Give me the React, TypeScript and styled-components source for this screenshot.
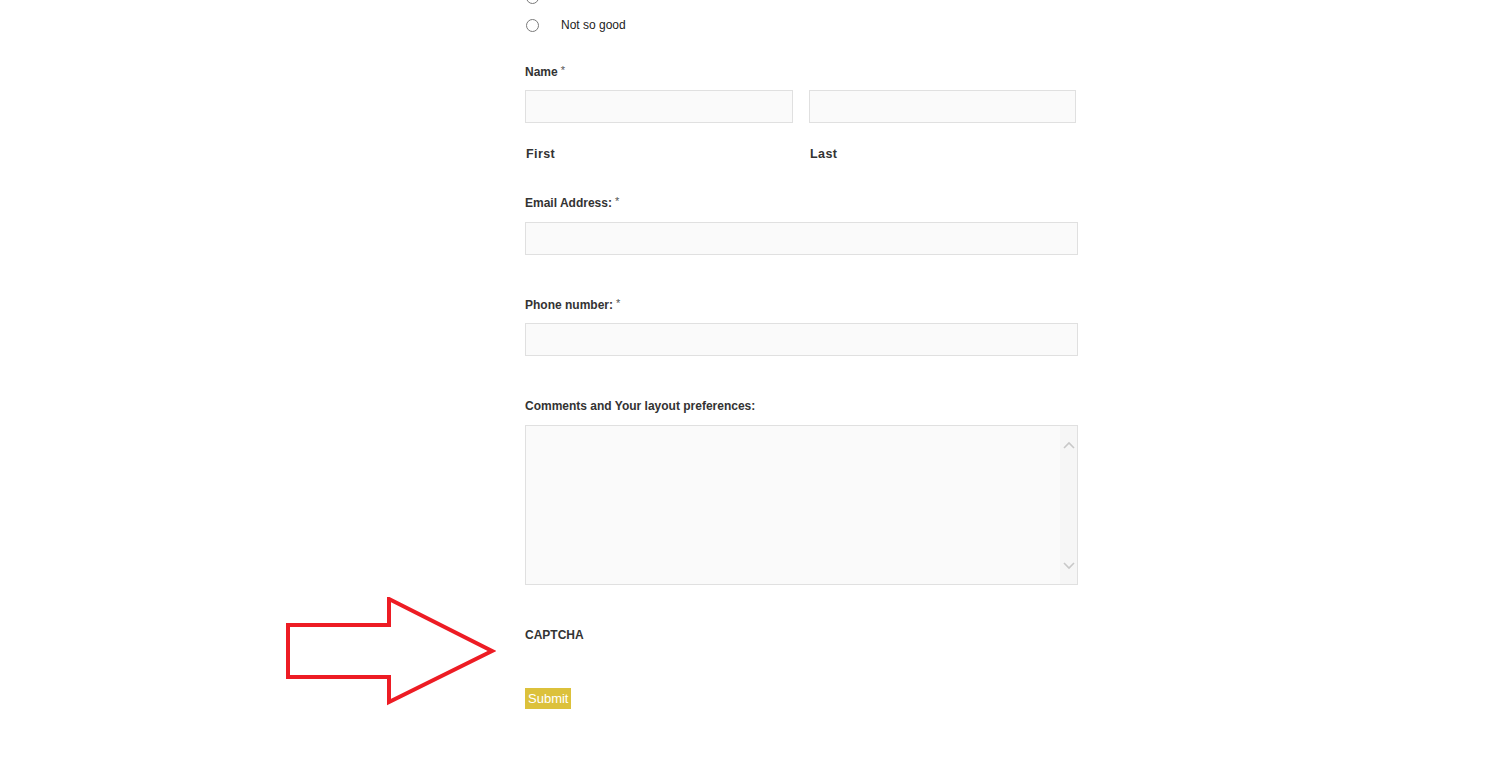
import React from "react";
import styled, { createGlobalStyle } from "styled-components";

const Global = createGlobalStyle`
  html, body { margin: 0; padding: 0; background: #ffffff; }
  body { font-family: Arial, "Liberation Sans", Helvetica, sans-serif; color: #333333; }
  * { box-sizing: border-box; }
`;

const Page = styled.div`
  position: relative;
  width: 1496px;
  height: 767px;
  overflow: hidden;
`;

const Form = styled.form`
  width: 553px;
  margin: -17px 0 0 525px;
  display: flex;
  flex-direction: column;
`;

const RadioRow = styled.label`
  height: 28px;
  display: flex;
  align-items: center;
  font-size: 12px;
  line-height: 16px;
  color: #222;
`;

const Radio = styled.input`
  appearance: none;
  width: 13px;
  height: 13px;
  margin: 0 22px 0 1px;
  border: 1px solid #7a7a7a;
  border-radius: 50%;
  background: #fff;
`;

const Label = styled.div<{ $top: number; $bottom: number }>`
  margin-top: ${(p) => p.$top}px;
  margin-bottom: ${(p) => p.$bottom}px;
  height: 16px;
  padding-top: 1px;
  font-size: 12px;
  line-height: 16px;
  font-weight: bold;
  color: #333;
`;

const Req = styled.span`
  position: relative;
  top: -2px;
  font-weight: normal;
  color: #555;
  font-size: 11px;
  line-height: 10px;
  margin-left: 3px;
`;

const NameGrid = styled.div`
  display: grid;
  grid-template-columns: 268px 267px;
  column-gap: 16px;
`;

const NameCol = styled.div`
  display: flex;
  flex-direction: column;
`;

const Input = styled.input`
  height: 33px;
  width: 100%;
  border: 1px solid #e0e0e0;
  background: #fafafa;
  outline: none;
`;

const SubLabel = styled.div`
  margin-top: 23px;
  padding-left: 1px;
  font-size: 12.5px;
  line-height: 16px;
  font-weight: bold;
  letter-spacing: 0.4px;
  color: #333;
`;

const AreaBox = styled.div`
  height: 160px;
  display: flex;
  border: 1px solid #e0e0e0;
  background: #fafafa;
`;

const TextArea = styled.textarea`
  flex: 1;
  border: none;
  background: transparent;
  resize: none;
  outline: none;
`;

const ScrollStrip = styled.div`
  width: 17px;
  background: #f6f6f6;
  display: flex;
  flex-direction: column;
  justify-content: space-between;
  align-items: center;
  padding: 15px 0 14px;
`;

const Submit = styled.button`
  align-self: flex-start;
  margin-top: 46px;
  height: 21px;
  padding: 0 3px;
  border: none;
  background: #dcc13b;
  color: #ffffff;
  font-family: Arial, "Liberation Sans", sans-serif;
  font-size: 13px;
  line-height: 21px;
`;

const ArrowSvg = styled.svg`
  position: absolute;
  left: 286px;
  top: 597px;
`;

const Chevron = ({ up }: { up?: boolean }) => (
  <svg width="12" height="8" viewBox="0 0 12 8">
    <polyline
      points={up ? "1,7 6,2 11,7" : "1,1 6,6 11,1"}
      fill="none"
      stroke="#c8c8c8"
      strokeWidth="1.6"
    />
  </svg>
);

export default function App() {
  return (
    <Page>
      <Global />
      <Form onSubmit={(e) => e.preventDefault()}>
        <RadioRow>
          <Radio type="radio" name="q" aria-label="Good" />
        </RadioRow>
        <RadioRow>
          <Radio type="radio" name="q" />
          Not so good
        </RadioRow>

        <Label $top={24} $bottom={11}>
          Name<Req>*</Req>
        </Label>
        <NameGrid>
          <NameCol>
            <Input />
            <SubLabel>First</SubLabel>
          </NameCol>
          <NameCol>
            <Input />
            <SubLabel>Last</SubLabel>
          </NameCol>
        </NameGrid>

        <Label $top={32} $bottom={12}>
          Email Address:<Req>*</Req>
        </Label>
        <Input />

        <Label $top={41} $bottom={11}>
          Phone number:<Req>*</Req>
        </Label>
        <Input />

        <Label $top={41} $bottom={12}>
          Comments and Your layout preferences:
        </Label>
        <AreaBox>
          <TextArea />
          <ScrollStrip>
            <Chevron up />
            <Chevron />
          </ScrollStrip>
        </AreaBox>

        <Label $top={41} $bottom={0}>
          CAPTCHA
        </Label>

        <Submit type="submit">Submit</Submit>
      </Form>

      <ArrowSvg width="210" height="110" viewBox="0 0 210 110">
        <polygon
          points="2,28 103,28 103,2 206,54 103,105 103,80 2,80"
          fill="none"
          stroke="#ed1c24"
          strokeWidth="4"
          strokeLinejoin="miter"
        />
      </ArrowSvg>
    </Page>
  );
}
